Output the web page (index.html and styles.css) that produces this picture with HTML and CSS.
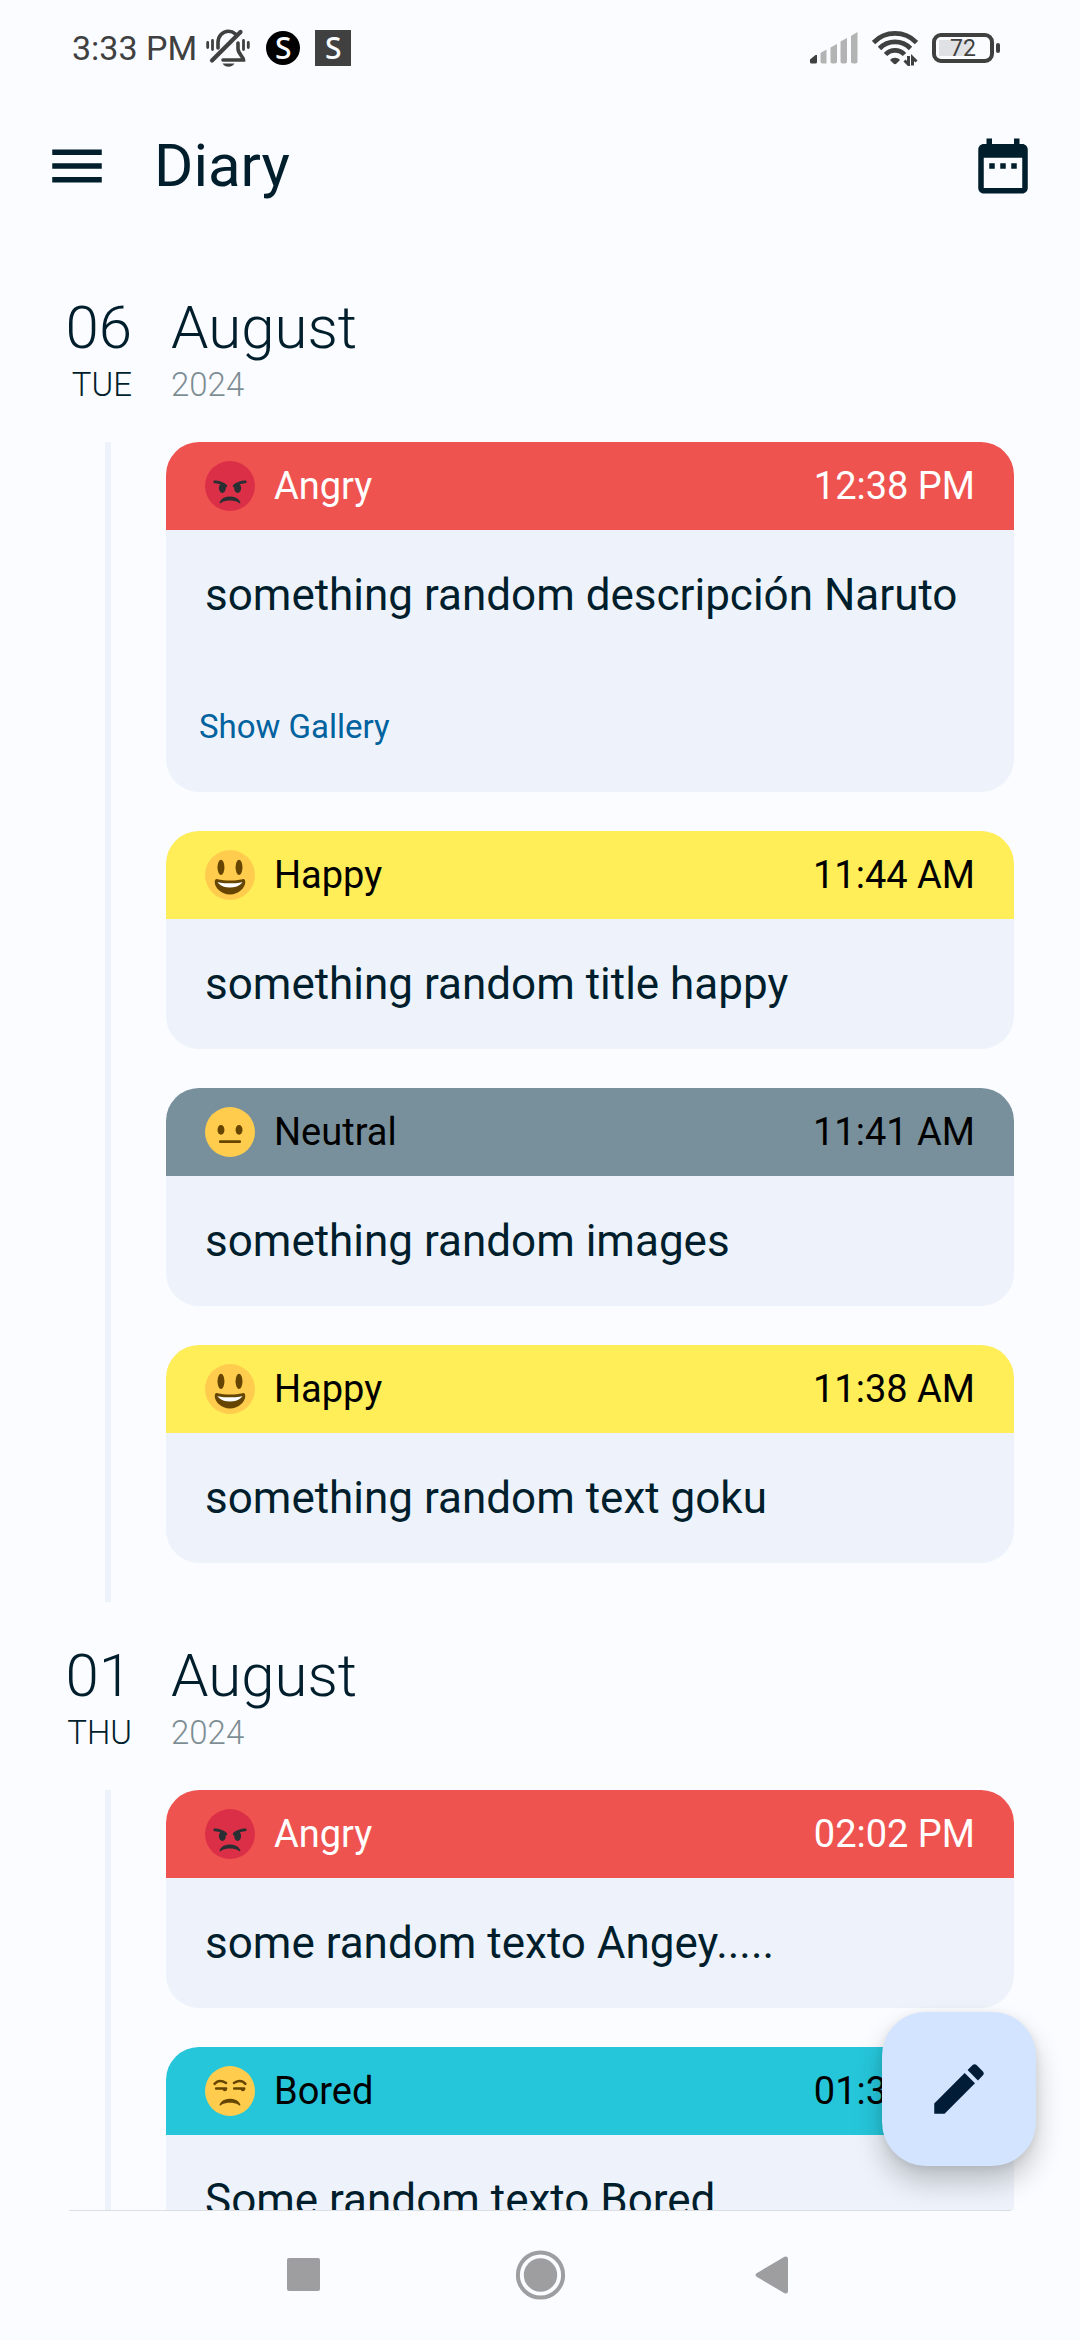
FILE: index.html
```html
<!DOCTYPE html>
<html lang="en">
<head>
<meta charset="utf-8">
<meta name="viewport" content="width=device-width, initial-scale=1">
<title>Diary</title>
<link rel="stylesheet" href="styles.css">
</head>
<body>
<svg class="defs" aria-hidden="true">
  <symbol id="frown" viewBox="0 0 36 36"><path d="M25.485 27.879C25.44 27.7 24.317 23.5 18 23.5c-6.318 0-7.44 4.2-7.485 4.379-.055.217.043.442.237.554.195.111.439.078.6-.077.019-.019 1.954-1.856 6.648-1.856s6.63 1.837 6.648 1.855c.096.095.224.145.352.145.084 0 .169-.021.246-.064.196-.112.294-.339.239-.557z"/></symbol>
  <symbol id="angry" viewBox="0 0 36 36">
    <circle fill="#da2f47" cx="18" cy="18" r="18"/>
    <g fill="#292f33" transform="translate(0 2)">
      <use href="#frown" width="36" height="36"/>
      <path d="M15.707 15.293C12.452 12.038 7.221 12 7 12c-.552 0-.999.447-.999.998-.001.552.446 1 .998 1.002.029 0 1.925.022 3.983.737-.593.64-.982 1.634-.982 2.763 0 1.934 1.119 3.5 2.5 3.5s2.5-1.566 2.5-3.5c0-.174-.019-.34-.037-.507.013 0 .025.007.037.007.256 0 .512-.098.707-.293.391-.391.391-1.023 0-1.414zM29 12c-.221 0-5.451.038-8.707 3.293-.391.391-.391 1.023 0 1.414.195.195.451.293.707.293.013 0 .024-.007.036-.007-.016.167-.036.333-.036.507 0 1.934 1.119 3.5 2.5 3.5s2.5-1.566 2.5-3.5c0-1.129-.389-2.123-.982-2.763 2.058-.715 3.954-.737 3.984-.737.551-.002.998-.45.997-1.002-.001-.551-.447-.998-.999-.998z"/>
    </g>
  </symbol>
  <symbol id="happy" viewBox="0 0 36 36">
    <circle fill="#ffcc4d" cx="18" cy="18" r="18"/>
    <g fill="#664500">
      <ellipse cx="11.5" cy="12.5" rx="2.5" ry="5.5"/>
      <ellipse cx="24.5" cy="12.5" rx="2.5" ry="5.5"/>
      <path d="M18 22c-3.623 0-6.027-.422-9-1-.679-.131-2 0-2 2 0 4 4.595 9 11 9 6.404 0 11-5 11-9 0-2-1.321-2.132-2-2-2.973.578-5.377 1-9 1z"/>
    </g>
    <path fill="#fff" d="M9 23s3 1 9 1 9-1 9-1-2 4-9 4-9-4-9-4z"/>
  </symbol>
  <symbol id="neutral" viewBox="0 0 36 36">
    <circle fill="#ffcc4d" cx="18" cy="18" r="18"/>
    <g fill="#664500">
      <ellipse cx="11.5" cy="16.5" rx="2.5" ry="3.5"/>
      <ellipse cx="24.5" cy="16.5" rx="2.5" ry="3.5"/>
      <rect x="10" y="24" width="16" height="2" rx="1"/>
    </g>
  </symbol>
  <symbol id="bored" viewBox="0 0 36 36">
    <circle fill="#ffcc4d" cx="18" cy="18" r="18"/>
    <use href="#frown" width="36" height="36" fill="#664500"/>
    <g fill="none" stroke="#664500" stroke-width="1.8" stroke-linecap="round">
      <path d="M6.9 12.9c2-2.3 5-2.7 8.300-.7M29.100 12.900c-2-2.300-5-2.700-8.300-.7M8 16.200h7.200M21 16.200h7.200"/>
    </g>
    <path fill="#664500" d="M12.500 16h3.400c.2 1.400-.6 2.200-1.600 2.200-1.100 0-1.800-.8-1.800-2.200zM25.500 16h3.400c.2 1.400-.6 2.200-1.600 2.200-1.100 0-1.800-.8-1.800-2.200z"/>
  </symbol>
</svg>

<div class="status">
  <div class="status-side">
    <span class="clock">3:33 PM</span>
    <svg class="bell" viewBox="0 0 44 40" aria-hidden="true">
      <g fill="none" stroke="#404040" stroke-width="3.600" stroke-linecap="round">
        <path d="M6 32.500 34.500 4" stroke-width="4.200"/>
        <path d="M12 20v-5.500C12 8 16.500 3.200 22.500 3.200c3 0 5 1 6.800 2.600"/>
        <path d="M32 15v5.500c0 5.500 5.500 8 5.500 11.500H17"/>
        <path d="M1.700 14.500v5M6.500 12.500v9M37.500 12.500v9M42.300 14.500v5" stroke-width="2.800"/>
      </g>
      <path fill="#404040" d="M16.500 35.500h12c-1.500 2.300-3.600 3.300-6 3.300s-4.500-1-6-3.300z"/>
    </svg>
    <span class="badge badge-round">S</span>
    <span class="badge badge-square">S</span>
  </div>
  <div class="status-side status-right">
    <svg class="signal" viewBox="0 0 48 32" aria-hidden="true">
      <path fill="#404040" d="M0 27.500 5.500 23h1.500v7q0 1.500-1.500 1.500h-4Q0 31.500 0 30z"/>
      <path fill="#b3b3b4" d="M10.500 21 16.500 17.500v14h-4q-2 0-2-2zM20.500 15.500 27 12v17.500q0 2-2 2h-2.500q-2 0-2-2zM30.500 9.500 37 6v23.500q0 2-2 2h-2.500q-2 0-2-2zM41 4 47.500 0v29.500q0 2-2 2H43q-2 0-2-2z"/>
    </svg>
    <svg class="wifi" viewBox="0 0 46 36" aria-hidden="true">
      <g fill="none" stroke="#404040" stroke-width="4.700">
        <path d="M1.500 12.500a30 30 0 0 1 43 0M7.500 18.500a21.500 21.500 0 0 1 31 0M13.500 24.500a13 13 0 0 1 19 0"/>
      </g>
      <path fill="#404040" d="M18 30c2.500-3 7.500-3 10 0l-3.500 3.500q-1.500 1.500-3 0z"/>
      <path fill="none" stroke="#404040" stroke-width="3" d="M36.500 26v8.500l-4-4M40.500 35.500v-8l4 4"/>
    </svg>
    <span class="battery"><span class="battery-level">72</span></span>
  </div>
</div>

<header class="appbar">
  <button class="icon-button" aria-label="Open menu"><svg viewBox="0 0 24 24"><path d="M3 18h18v-2H3v2zm0-5h18v-2H3v2zm0-7v2h18V6H3z"/></svg></button>
  <h1>Diary</h1>
  <button class="icon-button" aria-label="Pick a date"><svg viewBox="0 0 24 24"><path d="M9 11H7v2h2v-2zm4 0h-2v2h2v-2zm4 0h-2v2h2v-2zm2-7h-1V2h-2v2H8V2H6v2H5c-1.110 0-1.990.9-1.990 2L3 20c0 1.100.89 2 2 2h14c1.100 0 2-.9 2-2V6c0-1.100-.9-2-2-2zm0 16H5V9h14v11z"/></svg></button>
</header>

<div class="content">
  <main class="entries">
    <section>
      <h2 class="date">
        <span class="date-col date-day"><span class="date-big">06</span><span class="date-small">TUE</span></span>
        <span class="date-col"><span class="date-big">August</span><span class="date-small date-year">2024</span></span>
      </h2>
      <div class="timeline">
        <article class="card">
          <header class="mood mood-angry"><svg class="emoji" aria-hidden="true"><use href="#angry"/></svg><h3>Angry</h3><time>12:38 PM</time></header>
          <p>something random descripción Naruto</p>
          <button class="gallery">Show Gallery</button>
        </article>
        <article class="card">
          <header class="mood mood-happy"><svg class="emoji" aria-hidden="true"><use href="#happy"/></svg><h3>Happy</h3><time>11:44 AM</time></header>
          <p>something random title happy</p>
        </article>
        <article class="card">
          <header class="mood mood-neutral"><svg class="emoji" aria-hidden="true"><use href="#neutral"/></svg><h3>Neutral</h3><time>11:41 AM</time></header>
          <p>something random images</p>
        </article>
        <article class="card">
          <header class="mood mood-happy"><svg class="emoji" aria-hidden="true"><use href="#happy"/></svg><h3>Happy</h3><time>11:38 AM</time></header>
          <p>something random text goku</p>
        </article>
      </div>
    </section>
    <section>
      <h2 class="date">
        <span class="date-col date-day"><span class="date-big">01</span><span class="date-small">THU</span></span>
        <span class="date-col"><span class="date-big">August</span><span class="date-small date-year">2024</span></span>
      </h2>
      <div class="timeline">
        <article class="card">
          <header class="mood mood-angry"><svg class="emoji" aria-hidden="true"><use href="#angry"/></svg><h3>Angry</h3><time>02:02 PM</time></header>
          <p>some random texto Angey.....</p>
        </article>
        <article class="card">
          <header class="mood mood-bored"><svg class="emoji" aria-hidden="true"><use href="#bored"/></svg><h3>Bored</h3><time>01:38 PM</time></header>
          <p>Some random texto Bored</p>
        </article>
      </div>
    </section>
  </main>
  <button class="fab" aria-label="Write a new entry"><svg viewBox="0 0 24 24"><path d="M3 17.250V21h3.750L17.810 9.940l-3.750-3.750L3 17.250zM20.710 7.040c.39-.39.39-1.020 0-1.410l-2.340-2.340c-.39-.39-1.020-.39-1.410 0l-1.830 1.830 3.750 3.750 1.830-1.830z"/></svg></button>
</div>

<nav class="system-nav" aria-label="System">
  <button aria-label="Recent apps"><svg viewBox="0 0 66 66"><rect x="14" y="16" width="33" height="33" rx="2"/></svg></button>
  <button aria-label="Home"><svg viewBox="0 0 66 66"><circle cx="33.500" cy="33" r="16.700"/><circle cx="33.500" cy="33" r="22.600" fill="none" stroke="#9e9ea0" stroke-width="4"/></svg></button>
  <button aria-label="Back"><svg viewBox="0 0 66 66"><path d="M16 31 43.500 14.800Q46.500 13.500 47 16.500v33q-.5 3-3.500 1.700L16 35q-3-2 0-4z"/></svg></button>
</nav>
</body>
</html>
```
FILE: styles.css
```css
* {
  box-sizing: border-box;
}

body {
  margin: 0;
  height: 100vh;
  display: flex;
  flex-direction: column;
  background: #fbfcff;
  color: #001e2c;
  font-family: Roboto, "Liberation Sans", sans-serif;
}

h1, h2, h3, p {
  margin: 0;
  font-weight: 400;
}

button {
  margin: 0;
  padding: 0;
  border: 0;
  background: none;
  color: inherit;
  font: inherit;
  cursor: pointer;
}

svg {
  display: block;
}

.defs {
  position: absolute;
  width: 0;
  height: 0;
}

/* Status bar */
.status {
  flex: none;
  height: 78px;
  padding: 20px 86px 2px 72px;
  display: flex;
  justify-content: space-between;
  align-items: center;
  color: #404040;
}

.status-side {
  display: flex;
  align-items: center;
}

.status-right {
  gap: 14px;
}

.clock {
  font-size: 34px;
  line-height: 40px;
}

.bell {
  width: 44px;
  height: 40px;
  margin: 0 16px 0 9px;
}

.badge {
  display: flex;
  align-items: center;
  justify-content: center;
  color: #fbfcff;
  font-family: "Noto Sans", sans-serif;
  font-size: 30px;
  font-weight: 500;
  line-height: 34px;
}

.badge-round {
  width: 34px;
  height: 34px;
  margin-right: 15px;
  border-radius: 50%;
  background: #000;
}

.badge-square {
  width: 36px;
  height: 36px;
  background: #404040;
}

.signal {
  width: 48px;
  height: 32px;
}

.wifi {
  width: 46px;
  height: 36px;
}

.battery {
  position: relative;
  width: 62px;
  height: 30px;
  padding: 3px;
  border: 4px solid #404040;
  border-radius: 9px;
  background: linear-gradient(#e0e1e4, #e0e1e4) 3px 3px / 32px 16px no-repeat;
}

.battery::after {
  content: "";
  position: absolute;
  top: 6px;
  right: -10px;
  width: 4px;
  height: 10px;
  border-radius: 2px;
  background: #404040;
}

.battery-level {
  display: block;
  font-size: 23px;
  line-height: 18px;
  text-align: center;
}

/* App bar */
.appbar {
  flex: none;
  height: 176px;
  padding: 0 44px;
  display: flex;
  align-items: center;
  gap: 44px;
}

.appbar h1 {
  flex: 1;
  font-size: 60px;
  line-height: 72px;
}

.icon-button svg {
  width: 66px;
  height: 66px;
  fill: currentColor;
}

/* Diary entries */
.content {
  position: relative;
  flex: 1;
  min-height: 0;
}

.entries {
  height: 100%;
  overflow-y: auto;
  scrollbar-width: none;
}

.date {
  display: flex;
  gap: 39px;
  padding: 39px 66px 35px;
  font-weight: 300;
}

.date-col {
  display: flex;
  flex-direction: column;
}

.date-day {
  width: 66px;
  align-items: flex-end;
}

.date-big {
  font-size: 60px;
  line-height: 70px;
}

.date-small {
  font-size: 33px;
  line-height: 44px;
}

.date-year {
  opacity: .5;
}

.timeline {
  margin-left: 105px;
  padding: 0 66px 39px 55px;
  border-left: 6px solid #eef3fb;
  display: flex;
  flex-direction: column;
  gap: 39px;
}

.card {
  border-radius: 33px;
  overflow: hidden;
  background: #eef3fb;
}

.card p {
  padding: 32px 39px;
  font-size: 44px;
  line-height: 66px;
}

.mood {
  height: 88px;
  padding: 0 39px;
  display: flex;
  align-items: center;
  gap: 19px;
  font-size: 38px;
  line-height: 56px;
  color: #000;
}

.mood h3 {
  flex: 1;
  font-size: inherit;
}

.mood-angry {
  background: #ef5350;
  color: #fff;
}

.mood-happy {
  background: #ffee58;
}

.mood-neutral {
  background: #78909c;
}

.mood-bored {
  background: #26c6da;
}

.emoji {
  width: 50px;
  height: 50px;
}

.gallery {
  display: block;
  margin: 45px 33px 43px;
  font-size: 33px;
  line-height: 44px;
  color: #00629e;
}

.fab {
  position: absolute;
  right: 44px;
  bottom: 44px;
  width: 154px;
  height: 154px;
  border-radius: 44px;
  display: grid;
  place-items: center;
  background: #d2e4ff;
  color: #001c37;
  box-shadow: 0 16px 28px rgba(0, 0, 0, .22), 0 2px 10px rgba(0, 0, 0, .08);
}

.fab svg {
  width: 66px;
  height: 66px;
  fill: currentColor;
}

/* System navigation */
.system-nav {
  position: relative;
  flex: none;
  height: 130px;
  display: flex;
  align-items: center;
  justify-content: center;
  gap: 168px;
  background: #fbfcff;
}

.system-nav::before {
  content: "";
  position: absolute;
  top: 0;
  left: 69px;
  right: 69px;
  height: 1px;
  background: #dcdee2;
}

.system-nav svg {
  width: 66px;
  height: 66px;
  fill: #9e9ea0;
}
```
